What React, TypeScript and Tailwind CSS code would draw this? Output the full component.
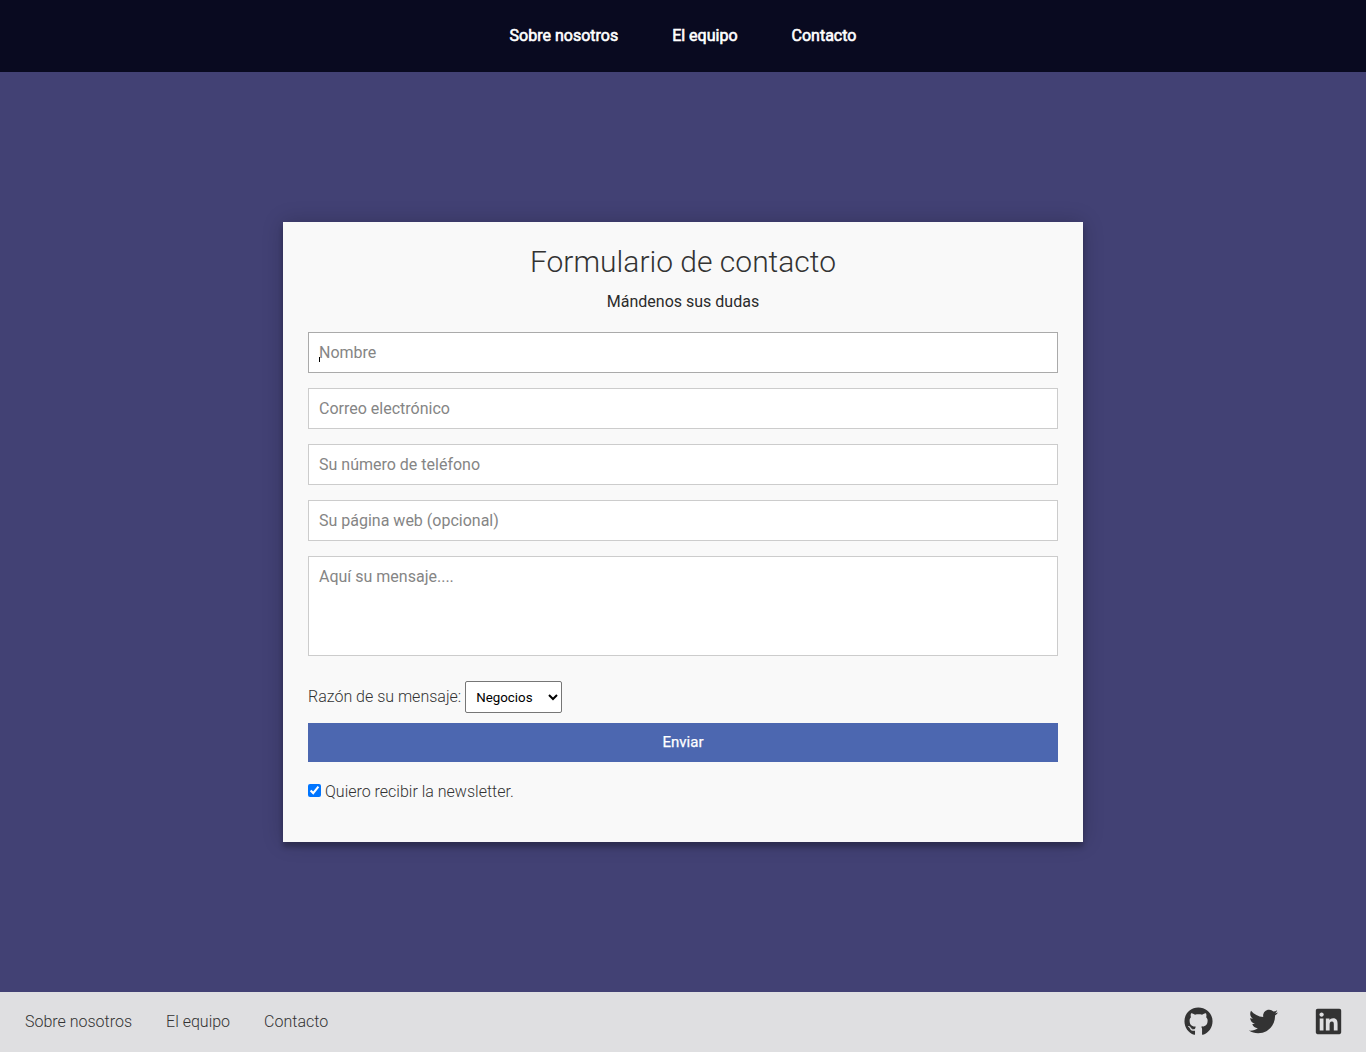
import { FaGithub, FaTwitter, FaLinkedin } from "react-icons/fa";

const links = ["Sobre nosotros", "El equipo", "Contacto"];
const field =
  "block w-full border bg-white p-[10px] text-base leading-[19px] placeholder:text-[#858585] outline-none rounded-none";

export default function App() {
  return (
    <div className="flex h-[1052px] flex-col bg-[#424174] font-['Roboto',sans-serif] text-base font-light text-[#333]">
      <header className="flex h-[72px] shrink-0 items-center justify-center gap-[54px] bg-[#090a20] font-normal text-white [-webkit-text-stroke:0.6px_white]">
        {links.map((l) => (
          <a key={l}>{l}</a>
        ))}
      </header>
      <main className="flex grow justify-center pt-[150px]">
        <form className="h-[620px] w-[800px] bg-[#f9f9f9] px-[25px] pt-[22px] shadow-[0_0_20px_0_rgba(0,0,0,0.2),0_5px_5px_0_rgba(0,0,0,0.24)]">
          <h3 className="text-center text-[30px] leading-[35px]">Formulario de contacto</h3>
          <h4 className="mt-[13px] mb-5 text-center font-normal leading-5 text-[#2b2b2b]">Mándenos sus dudas</h4>
          <div className="flex flex-col gap-[15px] font-normal">
            <div className="relative">
              <input className={`${field} border-[#aaa]`} placeholder="Nombre" />
              <span className="absolute top-[25px] left-[11px] h-[5px] w-px bg-black" />
            </div>
            <input className={`${field} border-[#ccc]`} placeholder="Correo electrónico" />
            <input className={`${field} border-[#ccc]`} placeholder="Su número de teléfono" />
            <input className={`${field} border-[#ccc]`} placeholder="Su página web (opcional)" />
            <textarea className={`${field} h-[100px] resize-none border-[#ccc]`} placeholder="Aquí su mensaje...." />
          </div>
          <div className="mt-[25px] flex h-8 items-center gap-1">
            <label>Razón de su mensaje:</label>
            <select className="h-8 w-[97px] rounded-[2px] border border-[#767676] bg-white px-[6px] text-[13.333px] font-normal text-black">
              <option>Negocios</option>
            </select>
          </div>
          <button
            type="button"
            className="mt-[10px] block h-[39px] w-full bg-[#4c67b0] text-[15px] font-normal text-white [-webkit-text-stroke:0.25px_white]"
          >
            Enviar
          </button>
          <label className="mt-[18px] flex items-center gap-1">
            <input type="checkbox" defaultChecked className="-mt-1 h-[13px] w-[13px]" />
            Quiero recibir la newsletter.
          </label>
        </form>
      </main>
      <footer className="flex h-[60px] shrink-0 items-center justify-between bg-[#dfdfe1] pr-[23px] pl-[25px]">
        <nav className="flex gap-[34px]">
          {links.map((l) => (
            <a key={l}>{l}</a>
          ))}
        </nav>
        <div className="flex gap-[36px] pb-[1px] text-[29px]">
          <FaGithub />
          <FaTwitter />
          <FaLinkedin />
        </div>
      </footer>
    </div>
  );
}
